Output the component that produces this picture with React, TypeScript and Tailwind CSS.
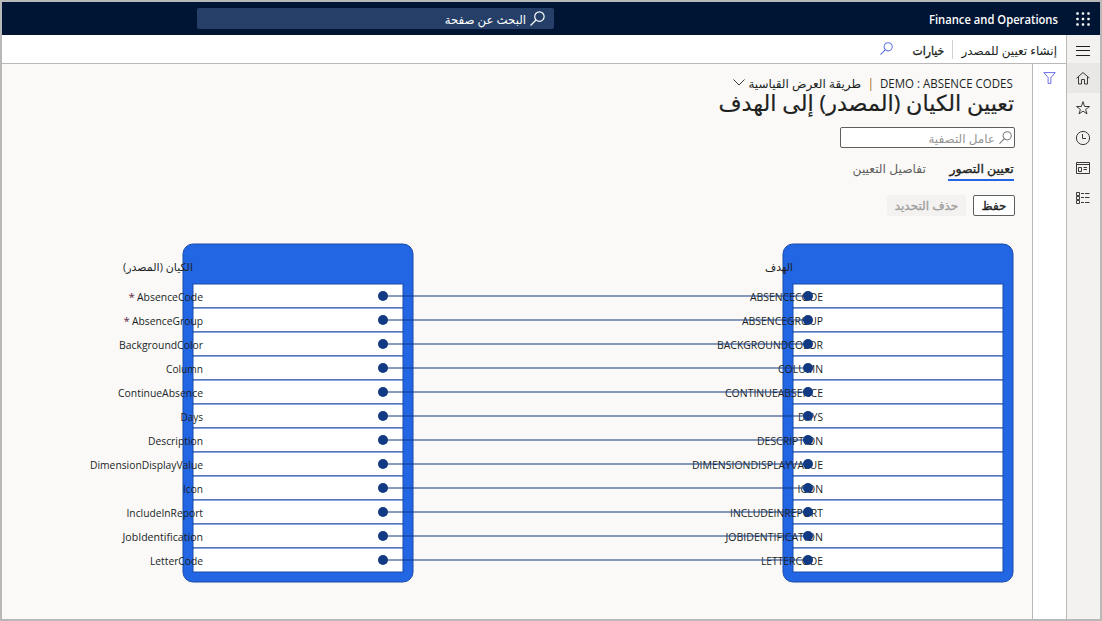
import React from "react";

type Field = { name: string; x: number; required?: boolean };

const sources: Field[] = [
  { name: "AbsenceCode", x: 137, required: true },
  { name: "AbsenceGroup", x: 132, required: true },
  { name: "BackgroundColor", x: 119 },
  { name: "Column", x: 166 },
  { name: "ContinueAbsence", x: 118 },
  { name: "Days", x: 180.5 },
  { name: "Description", x: 148 },
  { name: "DimensionDisplayValue", x: 90 },
  { name: "Icon", x: 183 },
  { name: "IncludeInReport", x: 126.5 },
  { name: "JobIdentification", x: 122.5 },
  { name: "LetterCode", x: 150 },
];

const targets: Field[] = [
  { name: "ABSENCECODE", x: 750 },
  { name: "ABSENCEGROUP", x: 742 },
  { name: "BACKGROUNDCOLOR", x: 717 },
  { name: "COLUMN", x: 778 },
  { name: "CONTINUEABSENCE", x: 725 },
  { name: "DAYS", x: 798 },
  { name: "DESCRIPTION", x: 757 },
  { name: "DIMENSIONDISPLAYVALUE", x: 692 },
  { name: "ICON", x: 797.5 },
  { name: "INCLUDEINREPORT", x: 730 },
  { name: "JOBIDENTIFICATION", x: 725.5 },
  { name: "LETTERCODE", x: 761 },
];

const ROW = 24;
const FIRST = 41;

function Search({ className }: { className: string }) {
  return (
    <svg viewBox="0 0 14 14" className={className} fill="none" stroke="currentColor" strokeWidth="1.1">
      <circle cx="8.8" cy="5.2" r="4.4" />
      <path d="M5.6 8.4 0.5 13.5" />
    </svg>
  );
}

function Entity({ x, title, titleX, fields, textEnd }: { x: number; title: string; titleX: number; fields: Field[]; textEnd: number }) {
  return (
    <g>
      <rect x={x} y={1} width={230} height={338} rx={10} fill="#2266e3" stroke="#194aa8" />
      {fields.map((f, i) => (
        <rect key={f.name} x={x + 10} y={FIRST + i * ROW} width={210} height={ROW} fill="#ffffff" stroke="#194aa8" />
      ))}
      <text x={titleX} y={28} textLength={x + 10 - titleX} lengthAdjust="spacingAndGlyphs" fontSize={11} fill="#201f1e">{title}</text>
      {fields.map((f, i) => (
        <g key={f.name} fill="#201f1e" fontSize={11.5}>
          {f.required && <text x={f.x - 8.5} y={FIRST + 17 + i * ROW} fill="#5c2440">*</text>}
          <text x={f.x} y={FIRST + 17 + i * ROW} textLength={textEnd - f.x} lengthAdjust="spacingAndGlyphs">{f.name}</text>
        </g>
      ))}
    </g>
  );
}

function Diagram() {
  return (
    <svg width="1014" height="341" viewBox="0 0 1014 341" className="block [direction:ltr]">
      <Entity x={183} title="الكيان (المصدر)" titleX={123} fields={sources} textEnd={203} />
      <Entity x={783} title="الهدف" titleX={765} fields={targets} textEnd={823} />
      {sources.map((f, i) => {
        const y = FIRST + 12 + i * ROW;
        return (
          <g key={f.name}>
            <path d={`M383 ${y}H808`} stroke="#0f3880" strokeWidth={2} strokeOpacity={0.5} />
            <circle cx={383} cy={y} r={5} fill="#123a82" />
            <circle cx={808} cy={y} r={5} fill="#123a82" />
          </g>
        );
      })}
    </svg>
  );
}

function SideIcon({ active, children }: { active?: boolean; children: React.ReactNode }) {
  return (
    <div className={active ? "flex h-[30px] items-center justify-center bg-[#e9e8e7] pl-px" : "flex h-[30px] items-center justify-center pl-px"}>
      <svg width="16" height="16" viewBox="0 0 16 16" fill="none" stroke="#3b3a39" strokeWidth="1" className="mr-[2px]">
        {children}
      </svg>
    </div>
  );
}

export default function App() {
  return (
    <div dir="rtl" className="flex h-[621px] w-[1102px] flex-col overflow-hidden border-2 border-[#b8b8b8] bg-[#faf9f8] font-['Open_Sans','DejaVu_Sans',sans-serif] text-[#201f1e]">
      <header className="flex h-[33px] shrink-0 items-center bg-[#001433] text-white">
        <div className="flex w-[34px] justify-center">
          <svg width="14" height="14" viewBox="0 0 14 14" fill="#fff" className="mr-px">
            {[1.5, 7, 12.5].map((y) => [1.5, 7, 12.5].map((x) => <rect key={`${x}-${y}`} x={x - 1.25} y={y - 1.25} width="2.5" height="2.5" rx=".8" />))}
          </svg>
        </div>
        <div className="mr-2 w-[129px] pt-[2px] text-[12px] font-semibold whitespace-nowrap">
          <span className="inline-block origin-right scale-x-[0.935]">Finance and Operations</span>
        </div>
        <div className="mr-[375px] flex h-[21px] w-[357px] items-center rounded-[2px] bg-[#253f68] pr-[9px] text-[12px]">
          <Search className="size-[15px]" />
          <span className="mr-[4px] inline-block origin-right scale-x-[0.98] pt-[2px] whitespace-nowrap">البحث عن صفحة</span>
        </div>
      </header>

      <div className="flex min-h-0 flex-1">
        <aside className="w-[34px] shrink-0 border-l border-[#b8b8b8] bg-[#f3f2f1]">
          <div className="flex h-[28px] items-center justify-center pt-[3px]">
            <svg width="14" height="10" viewBox="0 0 14 10" stroke="#201f1e" className="mr-px">
              <path d="M0 .5H14M0 4.5H14M0 9.5H14" />
            </svg>
          </div>
          <SideIcon active>
            <path d="M1.5 8.2 8 2.5l6.5 5.7M3.5 7V14h3V9.5h3V14h3V7" />
          </SideIcon>
          <SideIcon>
            <path d="m8 1.6 1.6 4.9h4.9l-3.9 3 1.4 4.4L8 11.1l-4 2.8 1.4-4.4-3.9-3h4.9Z" />
          </SideIcon>
          <SideIcon>
            <circle cx="8" cy="8" r="6.6" />
            <path d="M7.5 4v4.5h3.5" />
          </SideIcon>
          <SideIcon>
            <path d="M1.5 2.5h13v11h-13ZM1.5 4.5h13M3.5 7.5h3v4h-3ZM8.5 7.5H12M8.5 9.5H12" />
          </SideIcon>
          <SideIcon>
            <path d="M1.5 2.5h3v3h-3ZM1.5 6.5h3v3h-3ZM1.5 10.5h3v3h-3ZM6 3.5h3M10 3.5h4.5M6 7.5h3M10 7.5h4.5M6 12.5h3M10 12.5h4.5" />
          </SideIcon>
        </aside>

        <div className="flex min-w-0 flex-1 flex-col">
          <div className="flex h-[29px] shrink-0 items-center border-b border-[#b8b8b8] bg-white pr-[9px] text-[12px]">
            <div className="w-[97px] pt-[3px] whitespace-nowrap"><span className="inline-block">إنشاء تعيين للمصدر</span></div>
            <div className="mr-[7px] h-[19px] w-px bg-[#d2d0ce]" />
            <div className="mr-[8px] w-[32px] pt-[3px] whitespace-nowrap [-webkit-text-stroke:0.35px]"><span className="inline-block origin-right scale-x-[0.9]">خيارات</span></div>
            <Search className="mr-[19px] mb-px size-[13px] text-[#5b6fe0]" />
          </div>

          <div className="flex min-h-0 flex-1">
            <div className="w-[34px] shrink-0 border-l border-[#b8b8b8] bg-white pt-[8px]">
              <svg className="mx-auto block" width="13" height="12" viewBox="0 0 13 12" fill="none" stroke="#6b6fe8">
                <path d="M.8 .6H12.2L7.9 5.5V11.4H5.1V5.5Z" />
              </svg>
            </div>

            <main className="flex min-w-0 flex-1 flex-col">
              <div className="flex h-[28px] items-end pr-[18px] text-[12px] leading-[16px]">
                <div dir="ltr" className="w-[134px] whitespace-nowrap"><span className="inline-block origin-left scale-x-[0.957]">DEMO : ABSENCE CODES</span></div>
                <div className="mr-[6px] w-[4px] text-[#a06a10]">|</div>
                <div className="mr-[9px] w-[112px] whitespace-nowrap"><span className="inline-block">طريقة العرض القياسية</span></div>
                <svg className="mr-[4px] mb-[6px]" width="12" height="7" viewBox="0 0 12 7" fill="none" stroke="#3b3a39"><path d="M.5.5 6 6 11.5.5" /></svg>
              </div>
              <h1 className="h-[35px] pr-[18px] text-[22px] leading-[20px] whitespace-nowrap [-webkit-text-stroke:0.2px]"><span className="inline-block origin-right scale-x-[1.012]">تعيين الكيان (المصدر) إلى الهدف</span></h1>
              <div className="mr-[17px] flex h-[21px] w-[175px] items-center rounded-[2px] border border-[#605e5c] bg-white pr-[2px] text-[12px] text-[#979593]">
                <Search className="size-[13px] text-[#797775]" />
                <span className="mr-[4px] inline-block pt-[2px] whitespace-nowrap">عامل التصفية</span>
              </div>
              <nav className="mt-[10px] mr-[18px] flex h-[23px] text-[12px] leading-[22px]">
                <div className="w-[66px] border-b-2 border-[#2266e3] whitespace-nowrap [-webkit-text-stroke:0.35px]"><span className="inline-block origin-right scale-x-[1.04]">تعيين التصور</span></div>
                <div className="mr-[22px] w-[75px] whitespace-nowrap text-[#605e5c]"><span className="inline-block origin-right scale-x-[1.02]">تفاصيل التعيين</span></div>
              </nav>
              <div className="mt-[14px] mr-[17px] flex gap-[7px] text-[12px] [-webkit-text-stroke:0.35px]">
                <button className="flex h-[21px] w-[42px] items-center justify-center rounded-[2px] border border-[#605e5c] bg-white">حفظ</button>
                <button className="flex h-[21px] w-[79px] items-center justify-center rounded-[2px] bg-[#f3f2f1] whitespace-nowrap text-[#a19f9d]">حذف التحديد</button>
              </div>
              <div className="mt-[27px] mr-[18px]">
                <Diagram />
              </div>
            </main>
          </div>
        </div>
      </div>
    </div>
  );
}
